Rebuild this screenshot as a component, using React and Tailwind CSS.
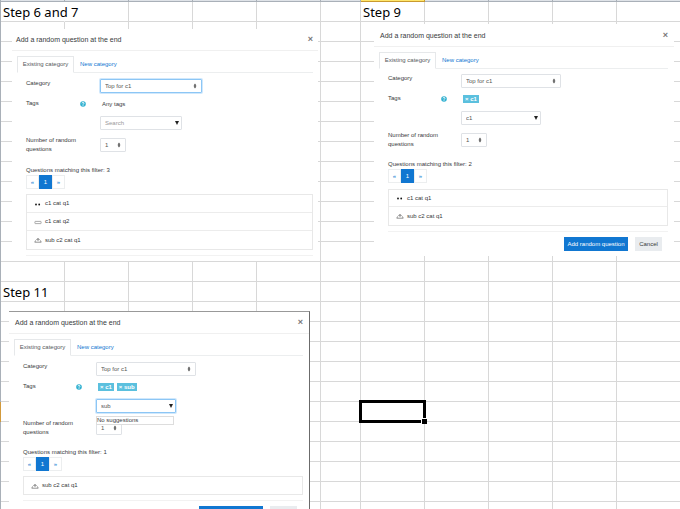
import React, { useId } from 'react';
import clsx from 'clsx';

const ROWS = Array.from({ length: 40 }, (_, i) => i);
const COLS = Array.from({ length: 11 }, (_, i) => i);
const LAST_COL = COLS.length - 1;

const LABELS = {
  '0-0': 'Step 6 and 7',
  '0-6': 'Step 9',
  '14-0': 'Step 11',
};

const ACTIVE = { row: 20, col: 6 };

function Sheet() {
  return (
    <table className="w-full table-fixed border-separate border-spacing-0">
      <colgroup>
        <col className="w-px" />
        <col className="w-16" />
        <col className="w-16" />
        <col className="w-16" />
        <col className="w-16" />
        <col className="w-16" />
        <col className="w-10" />
        <col className="w-16" />
        <col className="w-16" />
        <col className="w-16" />
        <col className="w-16" />
        <col />
      </colgroup>
      <thead>
        <tr>
          <th className="h-[2px] bg-[#a9b0b8] p-0" />
          {COLS.map((col) => (
            <th
              key={col}
              className={clsx(
                'h-[2px] border-b p-0',
                col !== LAST_COL && 'border-r',
                col === ACTIVE.col
                  ? 'border-[#c99a2e] bg-[#ffe66b]'
                  : 'border-[#a9b0b8] bg-[#dfe3e8]'
              )}
            />
          ))}
        </tr>
      </thead>
      <tbody>
        {ROWS.map((row) => (
          <tr key={row}>
            <th className={clsx('h-5 p-0', row === ACTIVE.row ? 'bg-[#d29a3c]' : 'bg-[#a9b0b8]')} />
            {COLS.map((col) => {
              const label = LABELS[`${row}-${col}`];
              const active = row === ACTIVE.row && col === ACTIVE.col;
              return (
                <td
                  key={col}
                  className={clsx(
                    'h-5 border-b border-b-[#d8d8d8] p-0',
                    active && 'relative',
                    col !== LAST_COL && 'border-r',
                    row === 0 && col === 0 ? 'border-r-white' : 'border-r-[#d8d8d8]'
                  )}
                >
                  {label && (
                    <div className="h-[19px] pl-[2px] font-['Noto_Sans','Open_Sans',sans-serif] text-[13px] leading-5 whitespace-nowrap text-black">
                      {label}
                    </div>
                  )}
                  {active && (
                    <>
                      <div className="absolute -inset-[2px] border-3 border-black" />
                      <div className="absolute -right-[3px] -bottom-[3px] h-[6px] w-[6px] border-t border-l border-white bg-black" />
                    </>
                  )}
                </td>
              );
            })}
          </tr>
        ))}
      </tbody>
    </table>
  );
}

function UpDown() {
  return (
    <svg viewBox="0 0 4 6" className="pointer-events-none absolute top-1/2 right-[5px] h-[6px] w-1 -translate-y-1/2 fill-[#444]">
      <path d="M2 0.6 3.4 2.7H0.6zM2 5.4 3.4 3.3H0.6z" />
    </svg>
  );
}

function HelpIcon() {
  return (
    <svg viewBox="0 0 12 12" className="h-[6px] w-[6px]">
      <circle cx="6" cy="6" r="5.6" fill="#2fb0d0" />
      <path d="M4 4.6C4 2.2 8 2.2 8 4.5 8 6 6 5.8 6 7.4M6 8.6V10" fill="none" stroke="#fff" strokeWidth="1.8" />
    </svg>
  );
}

function QuestionIcon({ type }) {
  return (
    <svg viewBox="0 0 8 6" className="h-[6px] w-2 shrink-0">
      {type === 'truefalse' && (
        <g fill="#111">
          <circle cx="2" cy="3.5" r="0.9" />
          <circle cx="5.2" cy="3.5" r="0.9" />
        </g>
      )}
      {type === 'short' && (
        <rect x="0.9" y="2.4" width="6.2" height="2.2" rx="0.4" fill="#fff" stroke="#888" strokeWidth="0.7" />
      )}
      {type === 'drag' && (
        <g fill="none" stroke="#666" strokeWidth="0.7">
          <path d="M1.6 3.4 0.8 5.2H7.2L6.4 3.4" />
          <path d="M4 1.2V4M2.4 3C2.6 1.5 5.4 1.5 5.6 3" />
        </g>
      )}
    </svg>
  );
}

const CONTROL = 'block w-full appearance-none rounded-[1px] border bg-white pl-1 text-[6px] leading-3 text-[#555] outline-none';
const FOCUSED = 'border-[#8cc6f5] ring-1 ring-[#d0e8fc]';
const PLAIN = 'border-[#dfe2e6]';

function RandomQuestionDialog({ className, framed, wide, tags, search, focus, suggestion, questions }) {
  const id = useId();
  const roomy = wide || framed;
  const rowClass = clsx('grid', wide ? 'grid-cols-[74px_1fr]' : 'grid-cols-[73px_1fr]');

  return (
    <section
      className={clsx(
        "absolute bg-white font-['Liberation_Sans',Arial,sans-serif] text-[6px] leading-[9px] text-[#373a3c]",
        framed && 'border-t border-r border-t-[#999] border-r-[#6b6b6b]',
        className
      )}
    >
      <header
        className={clsx(
          'flex items-center justify-between border-b border-[#f0f0f0]',
          roomy ? 'h-[22px]' : 'h-[23px]',
          wide ? 'pr-[5px] pl-1' : 'px-[6px]'
        )}
      >
        <h2 className="text-[7px]">Add a random question at the end</h2>
        <button type="button" aria-label="Close" className="text-[9px] leading-[9px] font-bold text-[#777]">×</button>
      </header>

      <div className={clsx('pt-[5px] pl-[6px]', wide ? 'pr-[5px]' : 'pr-[6px]')}>
        <div role="tablist" className="-ml-px flex border-b border-[#eceeef]">
          <button type="button" role="tab" aria-selected="true" className="-mb-px h-[17px] w-[57px] border border-[#e6e8ea] border-b-white bg-white text-[#55595c]">
            Existing category
          </button>
          <button type="button" role="tab" aria-selected="false" className="-mb-px h-[17px] pl-[6px] text-[#1177d1]">
            New category
          </button>
        </div>

        <div className={clsx('pl-2', roomy ? 'pt-[6px]' : 'pt-[5px]')}>
          <form className="flex flex-col gap-[6px]">
            <div className={rowClass}>
              <label htmlFor={`${id}cat`}>Category</label>
              <div className={clsx('relative', wide ? 'w-[102px]' : 'w-[100px]')}>
                <select id={`${id}cat`} className={clsx(CONTROL, 'h-[14px]', focus === 'category' ? FOCUSED : PLAIN)}>
                  <option>Top for c1</option>
                </select>
                <UpDown />
              </div>
            </div>

            <div className={rowClass}>
              <div className="flex items-center justify-between self-start pr-[14px]">
                <label htmlFor={`${id}tags`}>Tags</label>
                <HelpIcon />
              </div>
              <div>
                <div className="flex h-[17px] items-start gap-[3px] pt-px pl-[2px]">
                  {tags.length === 0 && <span>Any tags</span>}
                  {tags.map((tag) => (
                    <button key={tag} type="button" className="h-2 bg-[#5bc0de] px-[2px] text-[6px] leading-2 font-bold text-white">
                      × {tag}
                    </button>
                  ))}
                </div>
                <div className={clsx('relative', wide ? 'w-[82px]' : 'w-[80px]')}>
                  <input
                    id={`${id}tags`}
                    type="text"
                    placeholder="Search"
                    defaultValue={search}
                    className={clsx(CONTROL, 'h-[14px] placeholder:text-[#999]', focus === 'tags' ? FOCUSED : PLAIN)}
                  />
                  <svg viewBox="0 0 4 4" className="pointer-events-none absolute top-[5px] right-[3px] h-1 w-1 fill-[#222]">
                    <path d="M0 0H4L2 4z" />
                  </svg>
                  {suggestion && (
                    <div className="absolute top-[17px] left-0 z-10 h-[9px] w-[78px] border border-[#ddd] bg-white text-[6px] leading-[7px]">
                      {suggestion}
                    </div>
                  )}
                </div>
              </div>
            </div>

            <div className={rowClass}>
              <label htmlFor={`${id}num`} className="w-14">Number of random questions</label>
              <div className="relative mt-[2px] h-[14px] w-[26px]">
                <select id={`${id}num`} className={clsx(CONTROL, 'h-[14px]', PLAIN)}>
                  <option>1</option>
                </select>
                <UpDown />
              </div>
            </div>
          </form>

          <p className={wide ? 'pt-3' : 'pt-[11px]'}>Questions matching this filter: {questions.length}</p>
          <nav className="flex text-[#1177d1]">
            <button type="button" className="h-[14px] w-[13px] border border-[#eceeef]">«</button>
            <button type="button" className="h-[14px] w-[13px] bg-[#1177d1] text-white">1</button>
            <button type="button" className="h-[14px] w-[13px] border border-[#eceeef]">»</button>
          </nav>

          <ul className={clsx('divide-y divide-[#ececec] border border-[#e8e8e8]', roomy ? 'mt-[5px]' : 'mt-[6px]')}>
            {questions.map((question) => (
              <li
                key={question.name}
                className={clsx('flex h-[18px] items-center gap-[3px] pl-[7px]', !wide && 'first:h-[17px]')}
              >
                <QuestionIcon type={question.type} />
                {question.name}
              </li>
            ))}
          </ul>

          <footer className="mt-[5px] flex justify-end gap-[7px] border-t border-[#f2f2f2] pt-[5px] pr-[6px] leading-[6px]">
            {!wide && (
              <>
                <button type="button" className="h-[14px] w-16 bg-[#1177d1] text-white">Add random question</button>
                <button type="button" className="h-[14px] w-[27px] bg-[#e9ecef] text-[#373a3c]">Cancel</button>
              </>
            )}
          </footer>
        </div>
      </div>
    </section>
  );
}

export default function App() {
  return (
    <main className="relative h-screen overflow-hidden bg-white">
      <Sheet />
      <RandomQuestionDialog
        wide
        className="top-[29px] left-3 h-[232px] w-[306px]"
        tags={[]}
        search=""
        focus="category"
        questions={[
          { name: 'c1 cat q1', type: 'truefalse' },
          { name: 'c1 cat q2', type: 'short' },
          { name: 'sub c2 cat q1', type: 'drag' },
        ]}
      />
      <RandomQuestionDialog
        className="top-6 left-[374px] h-[232px] w-[300px]"
        tags={['c1']}
        search="c1"
        questions={[
          { name: 'c1 cat q1', type: 'truefalse' },
          { name: 'sub c2 cat q1', type: 'drag' },
        ]}
      />
      <RandomQuestionDialog
        framed
        className="top-[311px] left-[9px] w-[301px]"
        tags={['c1', 'sub']}
        search="sub"
        focus="tags"
        suggestion="No suggestions"
        questions={[{ name: 'sub c2 cat q1', type: 'drag' }]}
      />
    </main>
  );
}
